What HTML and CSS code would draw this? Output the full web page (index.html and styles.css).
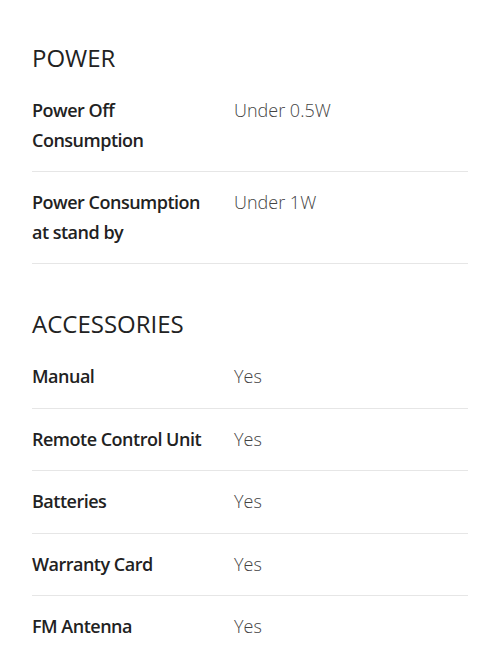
FILE: index.html
```html
<!DOCTYPE html>
<html>
<head>
<meta charset="utf-8">
<link rel="stylesheet" href="styles.css">
</head>
<body>
<div class="page">
  <section class="spec">
    <h2 class="spec-title">POWER</h2>
    <div class="spec-row">
      <div class="spec-label">Power Off Consumption</div>
      <div class="spec-value">Under 0.5W</div>
    </div>
    <div class="spec-row">
      <div class="spec-label">Power Consumption at stand by</div>
      <div class="spec-value">Under 1W</div>
    </div>
  </section>
  <section class="spec">
    <h2 class="spec-title">ACCESSORIES</h2>
    <div class="spec-row">
      <div class="spec-label">Manual</div>
      <div class="spec-value">Yes</div>
    </div>
    <div class="spec-row">
      <div class="spec-label">Remote Control Unit</div>
      <div class="spec-value">Yes</div>
    </div>
    <div class="spec-row">
      <div class="spec-label">Batteries</div>
      <div class="spec-value">Yes</div>
    </div>
    <div class="spec-row">
      <div class="spec-label">Warranty Card</div>
      <div class="spec-value">Yes</div>
    </div>
    <div class="spec-row">
      <div class="spec-label">FM Antenna</div>
      <div class="spec-value">Yes</div>
    </div>
  </section>
</div>
</body>
</html>
```

FILE: styles.css
```css
html, body {
  margin: 0;
  padding: 0;
  background: #fff;
}
body {
  font-family: "Open Sans", "Noto Sans", sans-serif;
  color: #222;
}
.page {
  padding: 42px 32px 0 32px;
  display: flex;
  flex-direction: column;
  gap: 44px;
}
.spec-title {
  margin: 0 0 6px 0;
  font-size: 24px;
  line-height: 32px;
  font-weight: 500;
  color: #222;
}
.spec-row {
  display: grid;
  grid-template-columns: 202px 1fr;
  padding: 16px 0;
  border-bottom: 1px solid #e6e6e6;
  font-size: 18px;
  line-height: 29.5px;
}
.spec-label {
  font-weight: 600;
  color: #222;
  letter-spacing: -0.5px;
  padding-right: 20px;
}
.spec-value {
  font-weight: 300;
  color: #444;
}
```
